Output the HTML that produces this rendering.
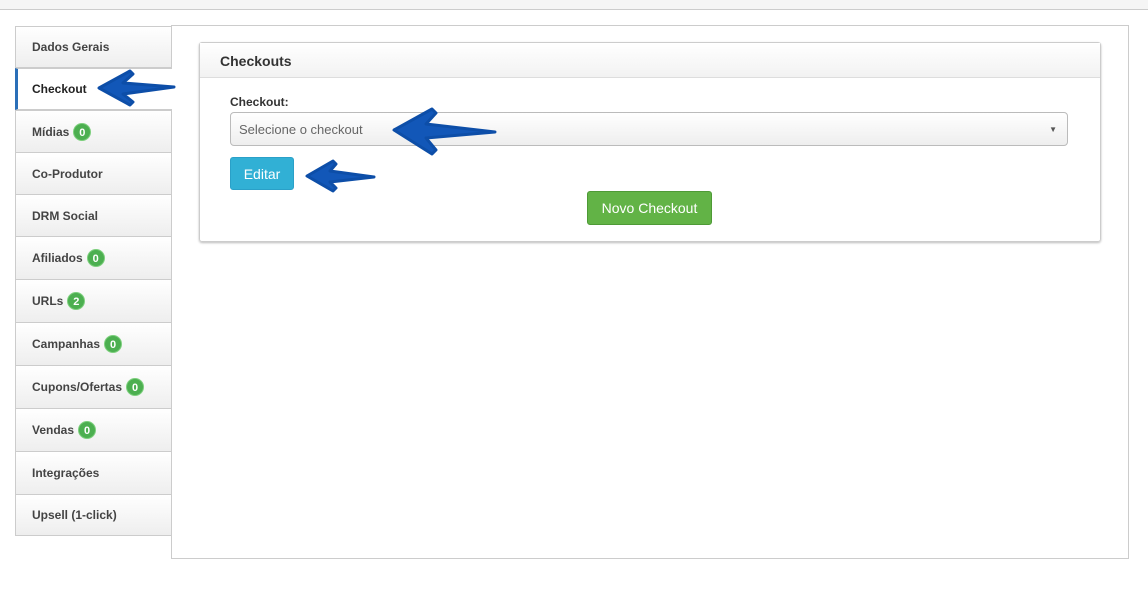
<!DOCTYPE html><html><head><style>
body{margin:0;width:1148px;height:597px;background:#fff;font-family:"Liberation Sans",sans-serif;position:relative;overflow:hidden}
.top{position:absolute;left:0;top:0;width:1148px;height:9px;background:#f5f5f5;border-bottom:1px solid #ccc}
.content{position:absolute;left:171px;top:25px;width:956px;height:532px;border:1px solid #ccc}
.tab{position:absolute;left:15px;width:157px;border:1px solid #ccc;background:linear-gradient(#fff,#eee);font-size:12px;font-weight:bold;color:#444;box-sizing:border-box;padding-left:16px;display:flex;align-items:center}
.tab.act{background:#fff;border-left:3px solid #2a6fb8;border-right:none;padding-left:14px;color:#222}
.b{display:inline-block;background:#4caf50;color:#fff;border-radius:9px;font-size:11px;min-width:18px;height:18px;line-height:18px;text-align:center;margin-left:4px;border:1px solid #7ccf7c;box-sizing:border-box}
.panel{position:absolute;left:199px;top:42px;width:900px;height:198px;border:1px solid #ccc;border-radius:3px;box-shadow:0 1px 2px #bbb}
.ph{height:34px;border-bottom:1px solid #ddd;background:linear-gradient(#fff,#f2f2f2);font-weight:bold;font-size:14px;color:#333;line-height:36px;padding-left:20px}
</style></head><body>
<div class="top"></div>
<div class="content"></div>
<div class="tab" style="top:26px;height:42px">Dados Gerais</div>
<div class="tab act" style="top:68px;height:42px">Checkout</div>
<div class="tab" style="top:110px;height:43px">Mídias<span class="b">0</span></div>
<div class="tab" style="top:152px;height:43px">Co-Produtor</div>
<div class="tab" style="top:194px;height:43px">DRM Social</div>
<div class="tab" style="top:236px;height:44px">Afiliados<span class="b">0</span></div>
<div class="tab" style="top:279px;height:44px">URLs<span class="b">2</span></div>
<div class="tab" style="top:322px;height:44px">Campanhas<span class="b">0</span></div>
<div class="tab" style="top:365px;height:44px">Cupons/Ofertas<span class="b">0</span></div>
<div class="tab" style="top:408px;height:44px">Vendas<span class="b">0</span></div>
<div class="tab" style="top:451px;height:44px">Integrações</div>
<div class="tab" style="top:494px;height:42px">Upsell (1-click)</div>
<div class="panel"><div class="ph">Checkouts</div></div>
<div style="position:absolute;left:230px;top:95px;font-size:12px;font-weight:bold;color:#333">Checkout:</div>
<div style="position:absolute;left:230px;top:112px;width:838px;height:34px;border:1px solid #bbb;border-radius:4px;background:linear-gradient(#fff,#eee);font-size:13px;color:#666;line-height:34px;padding-left:8px;box-sizing:border-box">Selecione o checkout<span style="position:absolute;right:10px;font-size:8px;color:#555">▼</span></div>
<div style="position:absolute;left:230px;top:157px;width:64px;height:33px;background:#31b0d5;border:1px solid #2aa0c8;border-radius:3px;color:#fff;font-size:14px;line-height:33px;text-align:center;box-sizing:border-box">Editar</div>
<div style="position:absolute;left:587px;top:191px;width:125px;height:34px;background:#62b346;border:1px solid #4e9a36;border-radius:3px;color:#fff;font-size:14px;line-height:33px;text-align:center;box-sizing:border-box">Novo Checkout</div>
<svg style="position:absolute;left:0;top:0" width="1148" height="597">
<g fill="#1257b8" stroke="#0d4ea8" stroke-width="3" stroke-linejoin="round">
<path d="M99,88 L130,71 L133,74 L123,83 L174,87 L123,94 L133,102 L130,105 Z"/>
<path d="M394,130 L432,109 L436,113 L426,124 L495,132 L426,138 L436,150 L432,154 Z"/>
<path d="M307,176 L333,161 L336,164 L330,171 L374,177 L330,182 L336,188 L333,191 Z"/>
</g></svg>
</body></html>
